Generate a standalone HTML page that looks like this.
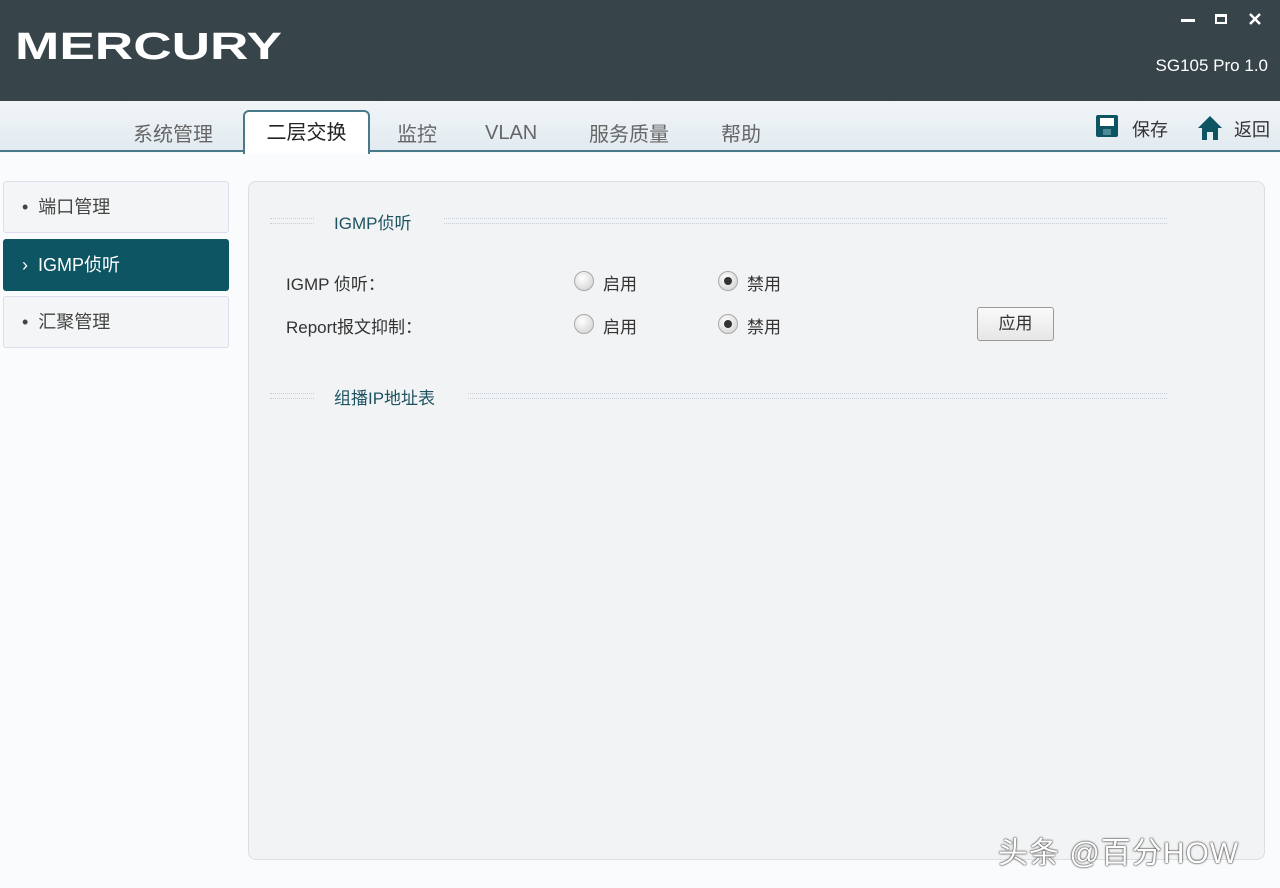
<!DOCTYPE html>
<html><head><meta charset="utf-8"><style>
*{margin:0;padding:0;box-sizing:border-box}
body{width:1280px;height:888px;overflow:hidden;background:#f4f6f8;font-family:"Liberation Sans","Noto Sans CJK SC",sans-serif;position:relative;color:#333}
.hdr{position:absolute;left:0;top:0;width:1280px;height:101px;background:#37444a}
.logo{position:absolute;left:15px;top:26px;color:#fff;font-weight:bold;font-size:38px;transform:scaleX(1.4);transform-origin:left}
.model{position:absolute;right:12px;top:56px;color:#fff;font-size:17px}
.tabs{position:absolute;left:0;top:101px;width:1280px;height:51px;background:linear-gradient(#f1f5f8,#e2ebf0);border-bottom:2px solid #4a7a8a}
.tab{position:absolute;top:118px;font-size:20px;color:#666}
.act{position:absolute;left:243px;top:110px;width:127px;height:44px;background:#fff;border:2px solid #4a7a8a;border-bottom:none;border-radius:6px 6px 0 0;font-size:20px;color:#222;text-align:center;line-height:42px}
.main{position:absolute;left:0;top:153px;width:1280px;height:735px;background:#fafbfc}
.side{position:absolute;left:3px;width:226px;height:52px;background:#f4f5f6;border:1px solid #dde;border-radius:3px;font-size:18px;color:#444;line-height:50px;padding-left:18px}
.side.on{background:#0e5563;color:#fff;border-color:#0e5563}
.panel{position:absolute;left:248px;top:181px;width:1017px;height:679px;background:#f2f3f4;border:1px solid #dcdfe2;border-radius:8px}
.sec{position:absolute;font-size:17px;color:#1d5360}
.dash{position:absolute;height:6px;border-top:1px dotted #c8d2d8;border-bottom:1px dotted #c8d2d8}
.lbl{position:absolute;font-size:17px;color:#333}
.rad{position:absolute;width:20px;height:20px;border-radius:50%;background:radial-gradient(circle at 40% 35%,#fff,#ccc);border:1px solid #aaa}
.rad.on::after{content:"";position:absolute;left:5px;top:5px;width:8px;height:8px;border-radius:50%;background:#333}
.btn{position:absolute;left:977px;top:307px;width:77px;height:34px;border:1px solid #999;border-radius:3px;background:linear-gradient(#fafafa,#e6e6e6);font-size:17px;text-align:center;line-height:32px}
</style></head><body>
<div class="hdr"><div class="logo">MERCURY</div>
<div style="position:absolute;left:1181px;top:19px;width:14px;height:3px;background:#fff"></div>
<div style="position:absolute;left:1215px;top:14px;width:12px;height:10px;border:2px solid #fff;border-top-width:3px"></div>
<svg style="position:absolute;left:1249px;top:13px" width="12" height="12"><path d="M1 1L11 11M11 1L1 11" stroke="#fff" stroke-width="2.5"/></svg>
<div class="model">SG105 Pro 1.0</div></div>
<div class="tabs"></div>
<div class="tab" style="left:133px">系统管理</div>
<div class="tab" style="left:397px">监控</div>
<div class="tab" style="left:485px;top:122px">VLAN</div>
<div class="tab" style="left:589px">服务质量</div>
<div class="tab" style="left:721px">帮助</div>
<svg style="position:absolute;left:1096px;top:115px" width="22" height="22"><rect x="0" y="0" width="22" height="22" rx="2" fill="#0e5563"/><rect x="4" y="3" width="14" height="8" fill="#fff"/><rect x="7" y="14" width="8" height="6" fill="#4d8a98"/></svg>
<div class="tab" style="left:1132px;top:116px;font-size:18px;color:#333">保存</div>
<svg style="position:absolute;left:1197px;top:115px" width="26" height="26"><path d="M13 1 L25 13 L21 13 L21 25 L16 25 L16 17 L10 17 L10 25 L5 25 L5 13 L1 13Z" fill="#0e5563"/></svg>
<div class="tab" style="left:1234px;top:116px;font-size:18px;color:#333">返回</div>
<div class="main"></div>
<div class="act">二层交换</div>
<div class="side" style="top:181px">•&nbsp; 端口管理</div>
<div class="side on" style="top:239px">›&nbsp; IGMP侦听</div>
<div class="side" style="top:296px">•&nbsp; 汇聚管理</div>
<div class="panel"></div>
<div class="dash" style="left:270px;top:218px;width:44px"></div>
<div class="sec" style="left:334px;top:209px">IGMP侦听</div>
<div class="dash" style="left:444px;top:218px;width:723px"></div>
<div class="dash" style="left:270px;top:393px;width:44px"></div>
<div class="sec" style="left:334px;top:384px">组播IP地址表</div>
<div class="dash" style="left:468px;top:393px;width:699px"></div>
<div class="lbl" style="left:286px;top:270px">IGMP 侦听：</div>
<div class="lbl" style="left:286px;top:313px">Report报文抑制：</div>
<div class="rad" style="left:574px;top:271px"></div><div class="lbl" style="left:603px;top:270px">启用</div>
<div class="rad on" style="left:718px;top:271px"></div><div class="lbl" style="left:747px;top:270px">禁用</div>
<div class="rad" style="left:574px;top:314px"></div><div class="lbl" style="left:603px;top:313px">启用</div>
<div class="rad on" style="left:718px;top:314px"></div><div class="lbl" style="left:747px;top:313px">禁用</div>
<div class="btn">应用</div>
<div style="position:absolute;left:998px;top:828px;font-size:30px;letter-spacing:1px;color:#fff;text-shadow:0 0 2px #333,0 0 1px #000">头条 @百分HOW</div>
</body></html>
